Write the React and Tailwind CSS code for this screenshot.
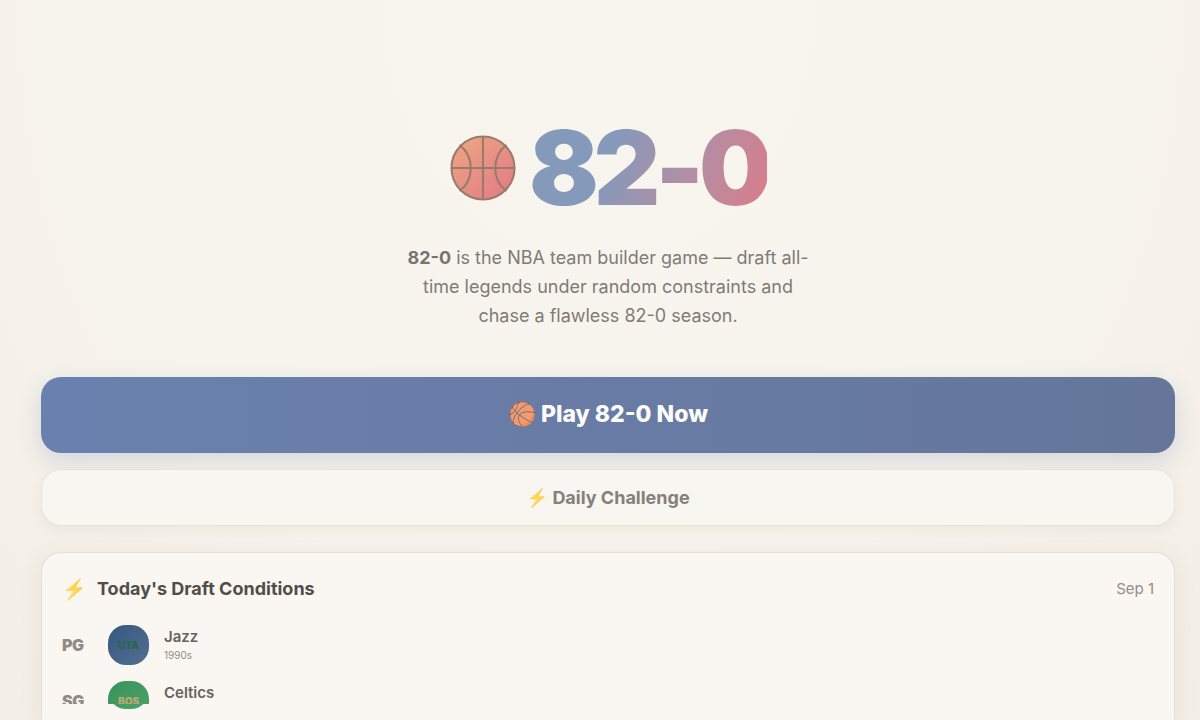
import React from 'react';

const SLOTS = [
  {
    position: 'PG',
    code: 'UTA',
    team: 'Jazz',
    era: '1990s',
    badge: 'from-[#355880] to-[#536f91] text-[#2c6650]',
  },
  {
    position: 'SG',
    code: 'BOS',
    team: 'Celtics',
    era: '',
    badge: 'from-[#389359] to-[#4da36e] text-[#bea874]',
    partial: true,
  },
];

export default function App() {
  return (
    <main className="h-screen overflow-hidden flex flex-col pl-[41px] pr-[25px] pt-[114px] font-['Inter',sans-serif] bg-radial-[at_50%_0%] from-[#f8f5ef] via-[#f7f4ed] via-60% to-[#f3eee6]">
      {/* HERO */}
      <header className="flex flex-col items-center">
        <h1 className="flex items-center gap-3 text-[103px] leading-[108px] font-black tracking-tighter">
          <BallLogo />
          <span className="text-transparent bg-clip-text bg-linear-110 from-[#8599bb] from-35% to-[#db7b89]">82-0</span>
        </h1>
        <p className="mt-[21px] max-w-[404px] text-center text-lg leading-[29px] text-[#7f7b75]">
          <strong className="font-bold text-[#77736d]">82-0</strong> is the NBA team builder game — draft all-time legends under random constraints and chase a flawless 82-0 season.
        </p>
      </header>

      {/* ACTIONS */}
      <div className="mt-[47px] flex flex-col gap-4">
        <button
          type="button"
          className="h-[76px] shrink-0 flex items-center justify-center gap-1 rounded-[20px] pb-px text-[23px] font-extrabold text-[#fdfcfb] bg-linear-to-r from-[#6a81af] to-[#65769a] shadow-[0_8px_24px_rgba(80,100,150,0.2)]"
        >
          <span className="bg-radial-[circle_closest-side] from-[#f8f5ef] from-80% to-transparent to-85%">
            <span className="opacity-65">🏀</span>
          </span>
          Play 82-0 Now
        </button>
        <button
          type="button"
          className="h-[57px] shrink-0 flex items-center justify-center gap-1 rounded-[20px] border border-[#e8e2d8] text-lg font-bold text-[#84807a] bg-[#f8f6f1] shadow-[0_4px_12px_rgba(90,70,40,0.06)]"
        >
          <span className="opacity-75">⚡</span> Daily Challenge
        </button>
      </div>

      {/* DRAFT CARD */}
      <section className="mt-[26px] flex-1 rounded-t-[20px] border border-b-0 border-[#e6dfd3] px-5 pt-[21px] bg-[#faf7f2] shadow-[0_4px_24px_rgba(90,70,40,0.08)]">
        <div className="flex items-center justify-between h-[30px]">
          <h2 className="flex items-center gap-[10px] text-lg font-bold text-[#514d49]">
            <span className="text-xl opacity-75">⚡</span> Today's Draft Conditions
          </h2>
          <time className="text-[15px] text-[#918d88]">Sep 1</time>
        </div>
        <ul className="mt-[21px] flex flex-col gap-4 h-[80px]">
          {SLOTS.map((slot) => (
            <SlotRow key={slot.position} slot={slot} />
          ))}
        </ul>
      </section>
    </main>
  );
}

// --- SUB COMPONENTS ---

function SlotRow({ slot }) {
  return (
    <li className="relative h-10 shrink-0">
      {/* bottom rim of a badge whose row is only partly revealed */}
      {slot.partial && (
        <div className="absolute left-[46px] top-[18px] w-[41px] h-[10px] overflow-hidden flex items-end">
          <div className={`w-full h-10 shrink-0 rounded-[18px] bg-linear-135 ${slot.badge}`} />
        </div>
      )}
      <div className={`relative overflow-hidden ${slot.partial ? 'h-[23px]' : 'h-10'}`}>
        <div className="flex items-center h-10">
          <span className="w-[46px] pb-px text-base leading-[22px] font-black tracking-tight text-[#918b86]">{slot.position}</span>
          <span className={`w-[41px] h-10 flex items-center justify-center rounded-[18px] text-[10px] font-black bg-linear-135 ${slot.badge}`}>
            {slot.code}
          </span>
          <div className="ml-[15px] flex flex-col h-10">
            <span className="text-[15px] leading-[23px] font-semibold text-[#66625d]">{slot.team}</span>
            <span className="text-[10px] leading-[15px] text-[#918d88]">{slot.era}</span>
          </div>
        </div>
      </div>
    </li>
  );
}

function BallLogo() {
  return (
    <svg width="68" height="68" viewBox="0 0 68 68" fill="none" aria-hidden="true">
      <defs>
        <linearGradient id="ball" x1="0" y1="0" x2="1" y2="1">
          <stop offset="0.1" stopColor="#eca482" />
          <stop offset="0.9" stopColor="#e37d85" />
        </linearGradient>
      </defs>
      <circle cx="34" cy="34" r="31.5" fill="url(#ball)" />
      <g stroke="#9b7a6e" strokeWidth="2.1">
        <circle cx="34" cy="34" r="31.5" />
        <path d="M34 2v64M2 34h64" />
        <path d="M10.5 11C25.500 22 25.500 46 10.5 57M57.5 11C42.500 22 42.500 46 57.5 57" />
      </g>
    </svg>
  );
}
